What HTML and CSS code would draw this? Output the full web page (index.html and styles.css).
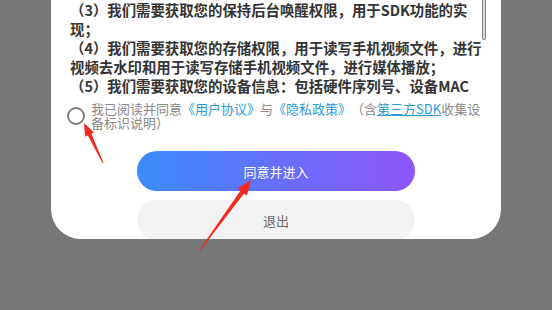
FILE: index.html
```html
<!DOCTYPE html>
<html lang="zh-CN">
<head>
<meta charset="utf-8">
<link rel="stylesheet" href="styles.css">
</head>
<body>
<div class="card">
  <div class="scroll">
    <div class="scroll-text">
      <p>（3）我们需要获取您的保持后台唤醒权限，用于SDK功能的实<br>现；</p>
      <p>（4）我们需要获取您的存储权限，用于读写手机视频文件，进行视频去水印和用于读写存储手机视频文件，进行媒体播放；</p>
      <p>（5）我们需要获取您的设备信息：包括硬件序列号、设备MAC</p>
    </div>
    <div class="scrollbar"></div>
  </div>
  <div class="consent">
    <span class="radio"></span>
    <p class="consent-text">我已阅读并同意<span class="link">《用户协议》</span>与<span class="link">《隐私政策》</span>（含<span class="link underline">第三方SDK</span>收集设备标识说明）</p>
  </div>
  <div class="actions">
    <button class="btn btn-primary">同意并进入</button>
    <button class="btn btn-exit">退出</button>
  </div>
</div>
<svg class="arrows" width="552" height="310" viewBox="0 0 552 310">
  <polygon fill="#f42a1e" points="103.4,162.8 91.4,133.8 94.1,132.6 84,123 85.1,136.8 87.8,135.6 102.6,163.2"/>
  <polygon fill="#f42a1e" points="200.4,250.3 244.0,193.4 247.0,195.6 251,180 237.4,188.6 240.4,190.8 199.6,249.7"/>
</svg>
</body>
</html>
```
FILE: styles.css
```css
html, body {
  margin: 0;
  padding: 0;
}
body {
  width: 552px;
  height: 310px;
  overflow: hidden;
  background: #777777;
  position: relative;
  font-family: "Noto Sans CJK SC", "Noto Sans", sans-serif;
}
.card {
  width: 450px;
  margin: 0 auto;
  background: #ffffff;
  border-radius: 0 0 30px 30px;
  overflow: hidden;
  height: 239px;
  display: flex;
  flex-direction: column;
}
.scroll {
  display: flex;
  flex: none;
  height: 95px;
  overflow: hidden;
  padding-left: 19px;
}
.scroll-text {
  flex: none;
  width: 412px;
  font-size: 14.4px;
  font-weight: bold;
  line-height: 19px;
  color: #333333;
  text-spacing-trim: space-all;
}
.scroll-text p {
  margin: 0;
}
.scrollbar {
  flex: none;
  width: 2px;
  height: 39px;
  background: #d9d9d9;
  border: 1px solid #8a8a8a;
  border-top: none;
  border-radius: 0 0 2px 2px;
}
.consent {
  display: flex;
  flex: none;
  align-items: center;
  gap: 6px;
  padding: 7px 15px 0 16px;
}
.radio {
  flex: none;
  width: 14px;
  height: 14px;
  border: 2px solid #808080;
  border-radius: 50%;
}
.consent-text {
  margin: 0;
  font-size: 13px;
  line-height: 14px;
  color: #8a8a8a;
  text-spacing-trim: space-all;
}
.link {
  color: #2a9bd6;
}
.underline {
  text-decoration: underline;
}
.actions {
  display: flex;
  flex-direction: column;
  align-items: center;
  gap: 9px;
  margin-top: 21px;
}
.btn {
  flex: none;
  width: 278px;
  border: none;
  border-radius: 20px;
  font-family: "Noto Sans CJK SC", "Noto Sans", sans-serif;
  font-size: 13px;
  padding: 0;
}
.btn-primary {
  height: 40px;
  color: #ffffff;
  background: linear-gradient(90deg, #3a8cfb 0%, #6a6cfb 55%, #8f56f9 100%);
}
.btn-exit {
  height: 40px;
  color: #666666;
  background: #f3f3f3;
}
.arrows {
  position: absolute;
  left: 0;
  top: 0;
}
```
